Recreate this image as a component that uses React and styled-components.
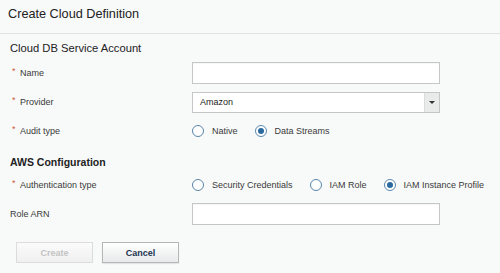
import React, { useState } from 'react';
import styled, { createGlobalStyle } from 'styled-components';

const GlobalStyle = createGlobalStyle`
  html, body {
    margin: 0;
    padding: 0;
    background: #f8f9f9;
    font-family: "Liberation Sans", Arial, sans-serif;
    color: #333;
  }
`;

const Page = styled.div`
  width: 500px;
  height: 273px;
  overflow: hidden;
  background: #f8f9f9;
`;

const Header = styled.div`
  height: 34px;
  box-sizing: border-box;
  padding: 7px 8px 0;
  border-bottom: 1px solid #dfe1e2;
`;

const Title = styled.h1`
  margin: 0;
  font-size: 12.7px;
  line-height: 15px;
  font-weight: normal;
  color: #222;
`;

const Body = styled.div`
  padding: 0 10px;
  display: flex;
  flex-direction: column;
`;

const SectionTitle = styled.h2`
  margin: ${p => p.$top}px 0 ${p => p.$bottom}px;
  font-size: ${p => (p.$bold ? '10.5px' : '11.2px')};
  font-weight: ${p => (p.$bold ? 'bold' : 'normal')};
  line-height: 14px;
  color: #222;
`;

const Row = styled.div`
  display: flex;
  align-items: center;
  height: 22px;
  margin-bottom: ${p => p.$gap || 0}px;
`;

const Label = styled.label`
  width: 182px;
  flex: none;
  font-size: 9px;
  color: #3a3a3a;
  display: flex;
  align-items: center;
`;

const Star = styled.span`
  color: #cf5a3e;
  font-size: 9px;
  width: 8px;
  margin-left: 2px;
  position: relative;
  top: -2px;
`;

const TextInput = styled.input`
  width: 248px;
  height: 22px;
  box-sizing: border-box;
  border: 1px solid #c4c6c7;
  background: #fff;
  box-shadow: inset 0 1px 1px rgba(0, 0, 0, 0.04);
  padding: 0 7px;
  font: 9px "Liberation Sans", Arial, sans-serif;
  outline: none;
`;

const SelectBox = styled.div`
  width: 248px;
  height: 21px;
  box-sizing: border-box;
  border: 1px solid #c4c6c7;
  background: #fff;
  display: flex;
  align-items: stretch;
  font-size: 9px;
  color: #222;
`;

const SelectValue = styled.div`
  flex: 1;
  display: flex;
  align-items: center;
  padding-left: 7px;
`;

const SelectArrow = styled.div`
  width: 14px;
  background: #e9eaea;
  border-left: 1px solid #dcdcdc;
  display: flex;
  align-items: center;
  justify-content: center;
  &::after {
    content: '';
    border-left: 3px solid transparent;
    border-right: 3px solid transparent;
    border-top: 3px solid #333;
  }
`;

const RadioGroup = styled.div`
  display: flex;
  align-items: center;
  gap: 17px;
`;

const RadioOption = styled.label`
  display: flex;
  align-items: center;
  gap: 8px;
  font-size: 9px;
  color: #3a3a3a;
  cursor: pointer;
`;

const RadioCircle = styled.span`
  width: 12px;
  height: 12px;
  box-sizing: border-box;
  border-radius: 50%;
  border: 1.5px solid ${p => (p.$checked ? '#5c88b0' : '#5a84a8')};
  background: #fff;
  display: flex;
  align-items: center;
  justify-content: center;
  &::after {
    content: '';
    width: 6px;
    height: 6px;
    border-radius: 50%;
    background: ${p => (p.$checked ? '#2a6a9f' : 'transparent')};
  }
`;

const Actions = styled.div`
  display: flex;
  gap: 9px;
  margin: 17px 0 0 6px;
`;

const Button = styled.button`
  width: 77px;
  height: 21px;
  box-sizing: border-box;
  font: bold 9px "Liberation Sans", Arial, sans-serif;
  border: 1px solid ${p => (p.$disabled ? '#dcdcdc' : '#b4b6b8')};
  color: ${p => (p.$disabled ? '#c3c3c3' : '#1b3550')};
  background: ${p =>
    p.$disabled
      ? 'linear-gradient(#fbfbfb, #f0f0f0)'
      : 'linear-gradient(#ffffff, #e8e9ea)'};
  box-shadow: ${p => (p.$disabled ? 'none' : '0 1px 1px rgba(0,0,0,0.08)')};
  padding: 0;
`;

function Radio({ label, checked, onClick }) {
  return (
    <RadioOption onClick={onClick}>
      <RadioCircle $checked={checked} />
      {label}
    </RadioOption>
  );
}

export default function App() {
  const [audit, setAudit] = useState('Data Streams');
  const [auth, setAuth] = useState('IAM Instance Profile');

  return (
    <Page>
      <GlobalStyle />
      <Header>
        <Title>Create Cloud Definition</Title>
      </Header>
      <Body>
        <SectionTitle $top={7} $bottom={7}>Cloud DB Service Account</SectionTitle>

        <Row $gap={7}>
          <Label><Star>*</Star>Name</Label>
          <TextInput />
        </Row>
        <Row $gap={7}>
          <Label><Star>*</Star>Provider</Label>
          <SelectBox>
            <SelectValue>Amazon</SelectValue>
            <SelectArrow />
          </SelectBox>
        </Row>
        <Row>
          <Label><Star>*</Star>Audit type</Label>
          <RadioGroup>
            {['Native', 'Data Streams'].map(o => (
              <Radio key={o} label={o} checked={audit === o} onClick={() => setAudit(o)} />
            ))}
          </RadioGroup>
        </Row>

        <SectionTitle $bold $top={13} $bottom={5}>AWS Configuration</SectionTitle>

        <Row $gap={7}>
          <Label><Star>*</Star>Authentication type</Label>
          <RadioGroup>
            {['Security Credentials', 'IAM Role', 'IAM Instance Profile'].map(o => (
              <Radio key={o} label={o} checked={auth === o} onClick={() => setAuth(o)} />
            ))}
          </RadioGroup>
        </Row>
        <Row>
          <Label>Role ARN</Label>
          <TextInput />
        </Row>

        <Actions>
          <Button $disabled>Create</Button>
          <Button>Cancel</Button>
        </Actions>
      </Body>
    </Page>
  );
}
